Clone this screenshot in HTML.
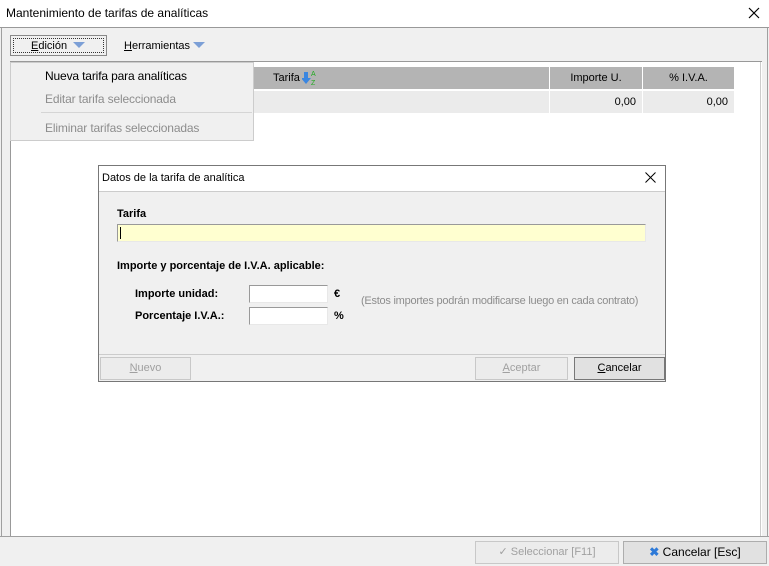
<!DOCTYPE html>
<html><head><meta charset="utf-8"><style>
*{box-sizing:border-box;margin:0;padding:0}
body{width:769px;height:566px;overflow:hidden;background:#f0f0f0;font-family:"Liberation Sans",sans-serif;font-size:11px;color:#000;position:relative}
.a{position:absolute}
.btn{position:absolute;background:#e1e1e1;border:1px solid #adadad;text-align:center;line-height:20px}
.dis{color:#a0a0a0;border-color:#c8c8c8;background:#ececec}
</style></head><body>
<div class="a" style="left:0;top:0;width:769px;height:28px;background:#fff"></div>
<div class="a" style="left:6px;top:6px;font-size:12px">Mantenimiento de tarifas de analíticas</div>
<svg class="a" style="left:748px;top:7px" width="12" height="12"><path d="M1 1L11 11M11 1L1 11" stroke="#000" stroke-width="1.2"/></svg>
<div class="a" style="left:0;top:27px;width:769px;height:1px;background:#999"></div>
<div class="a" style="left:1px;top:28px;width:1px;height:508px;background:#a0a0a0"></div>
<div class="a" style="left:767px;top:28px;width:1px;height:508px;background:#a0a0a0"></div>
<!-- toolbar -->
<div class="a" style="left:10px;top:35px;width:97px;height:21px;border:1px solid #888;background:#f0f0f0"></div>
<div class="a" style="left:13px;top:38px;width:91px;height:15px;border:1px dotted #333"></div>
<div class="a" style="left:31px;top:40px;font-size:11px"><u>E</u>dición</div>
<svg class="a" style="left:73px;top:42px" width="12" height="7"><path d="M0 0H12L6 6Z" fill="#7c9fd6"/></svg>
<div class="a" style="left:124px;top:40px"><u>H</u>erramientas</div>
<svg class="a" style="left:193px;top:42px" width="12" height="7"><path d="M0 0H12L6 6Z" fill="#7c9fd6"/></svg>
<!-- grid area -->
<div class="a" style="left:10px;top:61px;width:752px;height:475px;background:#fff;border-top:1px solid #999;border-left:1px solid #999"></div>
<div class="a" style="left:760px;top:62px;width:1px;height:474px;background:#ccc"></div>
<div class="a" style="left:12px;top:67px;width:537px;height:22px;background:#b4b4b4"></div>
<div class="a" style="left:550px;top:67px;width:92px;height:22px;background:#b4b4b4;text-align:center;line-height:22px">Importe U.</div>
<div class="a" style="left:643px;top:67px;width:91px;height:22px;background:#b4b4b4;text-align:center;line-height:22px">% I.V.A.</div>
<div class="a" style="left:273px;top:72px">Tarifa</div>
<svg class="a" style="left:302px;top:69px" width="16" height="18"><path d="M2 3h4v6h3l-5 6-5-6h3z" fill="#3a86e0"/><text x="9" y="7" font-size="7" fill="#2a2" font-family="Liberation Sans">A</text><text x="9" y="16" font-size="7" fill="#2a2" font-family="Liberation Sans">Z</text></svg>
<div class="a" style="left:12px;top:91px;width:537px;height:22px;background:#ebebeb"></div>
<div class="a" style="left:550px;top:91px;width:92px;height:22px;background:#ebebeb;text-align:right;padding-right:6px;line-height:22px">0,00</div>
<div class="a" style="left:643px;top:91px;width:91px;height:22px;background:#ebebeb;text-align:right;padding-right:6px;line-height:22px">0,00</div>
<!-- menu -->
<div class="a" style="left:10px;top:62px;width:244px;height:79px;background:#f0f0f0;border:1px solid #ccc"></div>
<div class="a" style="left:45px;top:69px;font-size:12px;letter-spacing:-0.15px">Nueva tarifa para analíticas</div>
<div class="a" style="left:45px;top:92px;font-size:12px;color:#8d8d8d;letter-spacing:-0.15px">Editar tarifa seleccionada</div>
<div class="a" style="left:41px;top:112px;width:211px;height:1px;background:#d5d5d5"></div>
<div class="a" style="left:45px;top:121px;font-size:12px;color:#8d8d8d;letter-spacing:-0.15px">Eliminar tarifas seleccionadas</div>
<!-- dialog -->
<div class="a" style="left:98px;top:165px;width:568px;height:217px;background:#f0f0f0;border:1px solid #777"></div>
<div class="a" style="left:99px;top:166px;width:566px;height:25px;background:#fff"></div>
<div class="a" style="left:102px;top:172px">Datos de la tarifa de analítica</div>
<svg class="a" style="left:645px;top:172px" width="11" height="11"><path d="M0.5 0.5L10.5 10.5M10.5 0.5L0.5 10.5" stroke="#000" stroke-width="1"/></svg>
<div class="a" style="left:99px;top:191px;width:566px;height:1px;background:#ccc"></div>
<div class="a" style="left:99px;top:354px;width:566px;height:1px;background:#ccc"></div>
<div class="a" style="left:117px;top:208px;font-weight:bold">Tarifa</div>
<div class="a" style="left:117px;top:224px;width:529px;height:18px;background:#ffffd0;border:1px solid #999;border-right-color:#e8e8e8;border-bottom-color:#e8e8e8"></div>
<div class="a" style="left:120px;top:227px;width:1px;height:12px;background:#000"></div>
<div class="a" style="left:117px;top:260px;font-weight:bold">Importe y porcentaje de I.V.A. aplicable:</div>
<div class="a" style="left:135px;top:288px;font-weight:bold">Importe unidad:</div>
<div class="a" style="left:135px;top:310px;font-weight:bold">Porcentaje I.V.A.:</div>
<div class="a" style="left:249px;top:285px;width:79px;height:18px;background:#fff;border:1px solid #999;border-right-color:#e8e8e8;border-bottom-color:#e8e8e8"></div>
<div class="a" style="left:249px;top:307px;width:79px;height:18px;background:#fff;border:1px solid #999;border-right-color:#e8e8e8;border-bottom-color:#e8e8e8"></div>
<div class="a" style="left:334px;top:288px;font-weight:bold">€</div>
<div class="a" style="left:334px;top:310px;font-weight:bold">%</div>
<div class="a" style="left:361px;top:295px;color:#8d8d8d;letter-spacing:-0.25px">(Estos importes podrán modificarse luego en cada contrato)</div>
<div class="btn dis" style="left:100px;top:357px;width:91px;height:23px"><u>N</u>uevo</div>
<div class="btn dis" style="left:475px;top:357px;width:93px;height:23px"><u>A</u>ceptar</div>
<div class="btn" style="left:574px;top:357px;width:91px;height:23px;border-color:#777"><u>C</u>ancelar</div>
<!-- bottom -->
<div class="a" style="left:0;top:536px;width:769px;height:1px;background:#a0a0a0"></div>
<div class="btn dis" style="left:475px;top:541px;width:144px;height:23px">✓ Seleccionar [F11]</div>
<div class="btn" style="left:623px;top:541px;width:144px;height:23px;font-size:12px"><span style="color:#2e7ad8;font-weight:bold">✖</span> Cancelar [Esc]</div>
</body></html>
